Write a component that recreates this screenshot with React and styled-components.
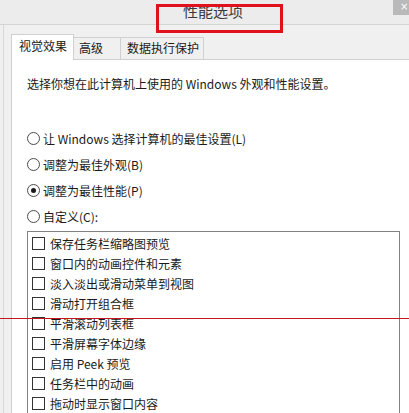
import React from 'react';
import styled, { createGlobalStyle } from 'styled-components';

const Global = createGlobalStyle`
  html, body { margin: 0; padding: 0; background: #f0f0f0; }
  body { font-family: "Noto Sans CJK SC", "Noto Sans", sans-serif; }
  * { box-sizing: border-box; }
`;

const Window = styled.div`
  position: relative;
  width: 409px;
  height: 413px;
  overflow: hidden;
  background: #f0f0f0;
  display: flex;
  flex-direction: column;
  font-family: "Noto Sans CJK SC", "Noto Sans", sans-serif;
  color: #1a1a1a;
`;

const TitleBar = styled.div`
  position: relative;
  flex: none;
  height: 25px;
  background: #ececec;
  border-bottom: 1px solid #d4d4d4;
  display: flex;
  justify-content: center;
  padding-left: 17px;
`;

const Title = styled.div`
  font-size: 15px;
  line-height: 22px;
  color: #3a3a3a;
`;

const CloseButton = styled.div`
  position: absolute;
  top: 0;
  right: 0;
  width: 16px;
  height: 15px;
  background: #b9b9b9;
  color: #fff;
  font-family: "DejaVu Sans", sans-serif;
  font-size: 10px;
  line-height: 13px;
  padding-left: 7px;
  overflow: hidden;
`;

const Body = styled.div`
  flex: 1;
  margin-left: 3px;
  border-left: 1px solid #d8d8d8;
  padding-left: 7px;
  display: flex;
  flex-direction: column;
`;

const TabRow = styled.div`
  margin-top: 8px;
  height: 26px;
  display: flex;
  align-items: flex-end;
`;

const Tab = styled.div`
  position: relative;
  z-index: ${p => (p.$active ? 2 : 0)};
  width: ${p => p.$w}px;
  height: ${p => (p.$active ? 26 : 22)}px;
  margin-bottom: ${p => (p.$active ? -1 : 0)}px;
  margin-left: ${p => (p.$first ? 0 : -1)}px;
  background: ${p => (p.$active ? '#ffffff' : '#f0f0f0')};
  border: 1px solid #d0d0d0;
  border-bottom: none;
  font-size: 12px;
  line-height: ${p => (p.$active ? 22 : 20)}px;
  padding-left: ${p => p.$pl}px;
  white-space: nowrap;
`;

const Panel = styled.div`
  flex: 1;
  position: relative;
  z-index: 1;
  background: #ffffff;
  border-top: 1px solid #d0d0d0;
  border-left: 1px solid #d0d0d0;
  padding-left: 15px;
  display: flex;
  flex-direction: column;
`;

const Description = styled.div`
  margin-top: 15px;
  font-size: 12px;
  line-height: 17px;
  white-space: nowrap;
`;

const RadioGroup = styled.div`
  margin-top: 33px;
  display: flex;
  flex-direction: column;
`;

const RadioRow = styled.div`
  height: 26px;
  display: flex;
  align-items: center;
  font-size: 12px;
  white-space: nowrap;
`;

const RadioCircle = styled.span`
  width: 13px;
  height: 13px;
  border: 1px solid #4a4a4a;
  border-radius: 50%;
  background: #fff;
  margin-right: 3px;
  display: flex;
  align-items: center;
  justify-content: center;
  flex: none;
  &::after {
    content: '';
    width: 5px;
    height: 5px;
    border-radius: 50%;
    background: ${p => (p.$checked ? '#1a1a1a' : 'transparent')};
  }
`;

const ListBox = styled.div`
  margin-top: 2px;
  width: 373px;
  border: 1px solid #828282;
  padding: 1px 0 0 4px;
  display: flex;
  flex-direction: column;
  flex: 1;
`;

const CheckRow = styled.div`
  height: 20px;
  display: flex;
  align-items: center;
  font-size: 12px;
  white-space: nowrap;
`;

const CheckBox = styled.span`
  width: 13px;
  height: 13px;
  border: 1px solid #333;
  background: #fff;
  margin-right: 5px;
  flex: none;
`;

const RedBox = styled.div`
  position: absolute;
  left: 156px;
  top: 4px;
  width: 127px;
  height: 29px;
  border: 3px solid #e0101c;
  z-index: 5;
`;

const RedLine = styled.div`
  position: absolute;
  left: 0;
  right: 0;
  top: 318px;
  height: 1px;
  background: #c4161c;
  z-index: 5;
`;

const radios = [
  { label: '让 Windows 选择计算机的最佳设置(L)' },
  { label: '调整为最佳外观(B)' },
  { label: '调整为最佳性能(P)', checked: true },
  { label: '自定义(C):' },
];

const checks = [
  '保存任务栏缩略图预览',
  '窗口内的动画控件和元素',
  '淡入淡出或滑动菜单到视图',
  '滑动打开组合框',
  '平滑滚动列表框',
  '平滑屏幕字体边缘',
  '启用 Peek 预览',
  '任务栏中的动画',
  '拖动时显示窗口内容',
];

export default function App() {
  return (
    <>
      <Global />
      <Window>
        <TitleBar>
          <Title>性能选项</Title>
          <CloseButton>×</CloseButton>
        </TitleBar>
        <Body>
          <TabRow>
            <Tab $active $first $w={63} $pl={7}>视觉效果</Tab>
            <Tab $w={48} $pl={5}>高级</Tab>
            <Tab $w={84} $pl={6}>数据执行保护</Tab>
          </TabRow>
          <Panel>
            <Description>选择你想在此计算机上使用的 Windows 外观和性能设置。</Description>
            <RadioGroup>
              {radios.map(r => (
                <RadioRow key={r.label}>
                  <RadioCircle $checked={r.checked} />
                  {r.label}
                </RadioRow>
              ))}
            </RadioGroup>
            <ListBox>
              {checks.map(c => (
                <CheckRow key={c}>
                  <CheckBox />
                  {c}
                </CheckRow>
              ))}
            </ListBox>
          </Panel>
        </Body>
        <RedBox />
        <RedLine />
      </Window>
    </>
  );
}
